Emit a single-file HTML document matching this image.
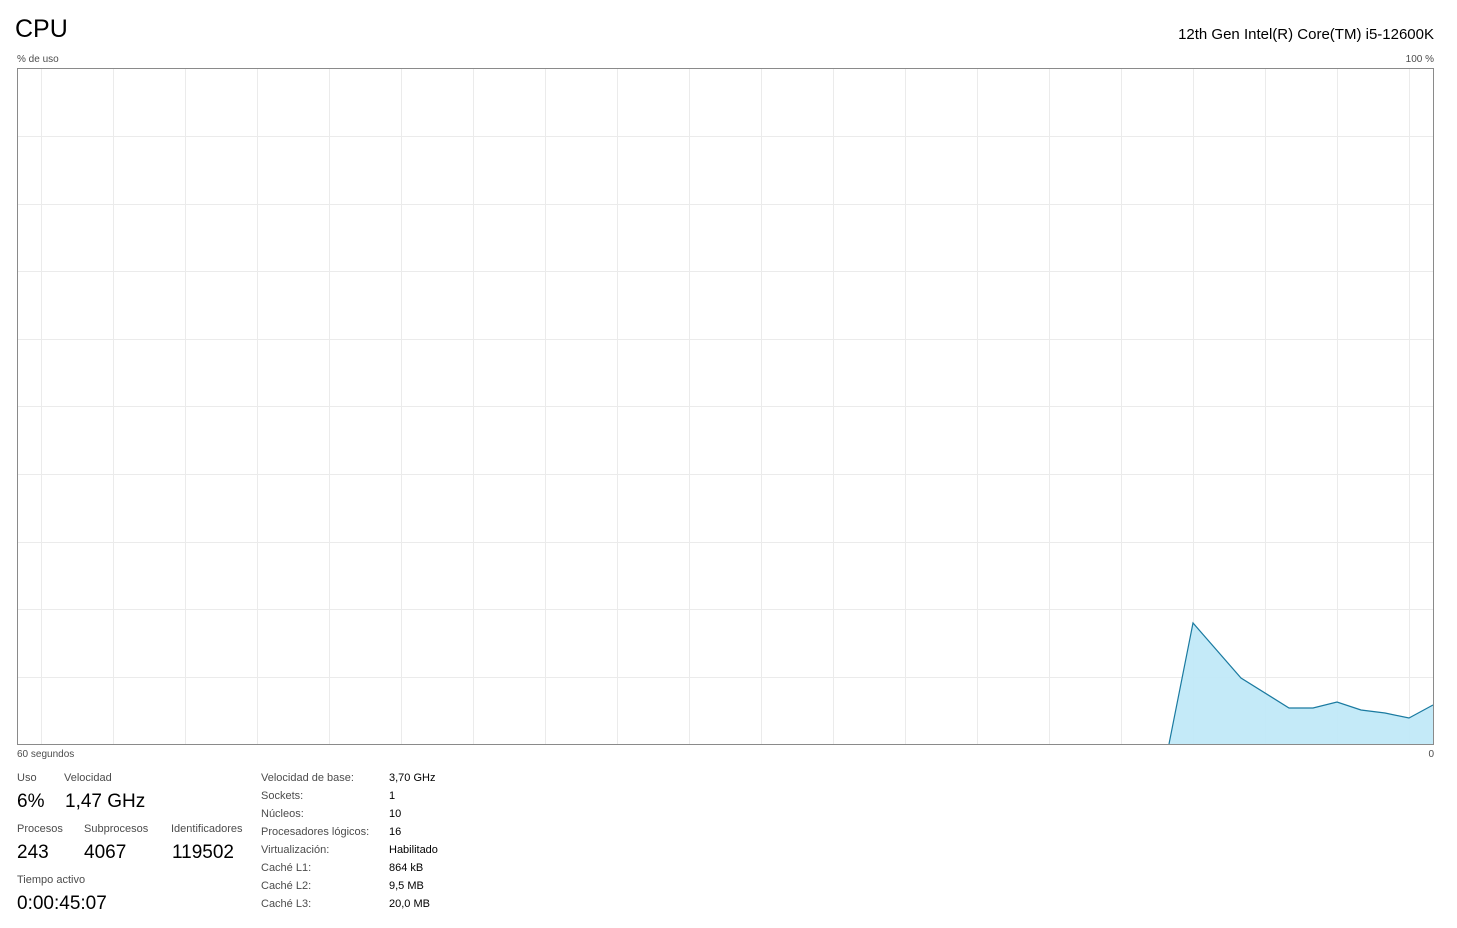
<!DOCTYPE html><html><head><meta charset="utf-8"><style>
body{margin:0;width:1457px;height:928px;background:#fff;font-family:"Liberation Sans",sans-serif;position:relative;overflow:hidden;color:#000}
.a{position:absolute;white-space:nowrap}
.g{color:#4c4c4c;font-size:11px}
.s{font-size:10px;color:#4c4c4c}
.b{font-size:19px}
.v{font-size:11px}
</style></head><body>
<div class="a" style="left:15px;top:15px;font-size:25px">CPU</div>
<div class="a" style="right:23px;top:26px;font-size:15px">12th Gen Intel(R) Core(TM) i5-12600K</div>
<div class="a s" style="left:17px;top:54px">% de uso</div>
<div class="a s" style="right:23px;top:54px">100 %</div>
<svg class="a" style="left:0;top:0" width="1457" height="760">
<g stroke="#ebebeb" stroke-width="1">
<path d="M41.5 68V744M113.5 68V744M185.5 68V744M257.5 68V744M329.5 68V744M401.5 68V744M473.5 68V744M545.5 68V744M617.5 68V744M689.5 68V744M761.5 68V744M833.5 68V744M905.5 68V744M977.5 68V744M1049.5 68V744M1121.5 68V744M1193.5 68V744M1265.5 68V744M1337.5 68V744M1409.5 68V744"/>
<path d="M17 136.5H1433M17 204.5H1433M17 271.5H1433M17 339.5H1433M17 406.5H1433M17 474.5H1433M17 542.5H1433M17 609.5H1433M17 677.5H1433"/>
</g>
<path d="M1169 744L1193 623L1241 678L1289 708L1313 708L1337 702L1361 710L1385 713L1409 718L1433 705V744Z" fill="#c1e9f8" fill-opacity="0.95"/>
<path d="M1169 744L1193 623L1241 678L1289 708L1313 708L1337 702L1361 710L1385 713L1409 718L1433 705" fill="none" stroke="#1a7aa0" stroke-width="1.2"/>
<rect x="17.5" y="68.5" width="1416" height="676" fill="none" stroke="#8a8a8a" stroke-width="1"/>
</svg>
<div class="a s" style="left:17px;top:749px">60 segundos</div>
<div class="a s" style="right:23px;top:749px">0</div>
<div class="a g" style="left:17px;top:772px">Uso</div>
<div class="a g" style="left:64px;top:772px">Velocidad</div>
<div class="a b" style="left:17px;top:791px">6%</div>
<div class="a b" style="left:65px;top:791px">1,47 GHz</div>
<div class="a g" style="left:17px;top:823px">Procesos</div>
<div class="a g" style="left:84px;top:823px">Subprocesos</div>
<div class="a g" style="left:171px;top:823px">Identificadores</div>
<div class="a b" style="left:17px;top:842px">243</div>
<div class="a b" style="left:84px;top:842px">4067</div>
<div class="a b" style="left:172px;top:842px">119502</div>
<div class="a g" style="left:17px;top:874px">Tiempo activo</div>
<div class="a b" style="left:17px;top:893px">0:00:45:07</div>
<div class="a g" style="left:261px;top:769px;line-height:18px">Velocidad de base:<br>Sockets:<br>Núcleos:<br>Procesadores lógicos:<br>Virtualización:<br>Caché L1:<br>Caché L2:<br>Caché L3:</div>
<div class="a v" style="left:389px;top:769px;line-height:18px">3,70 GHz<br>1<br>10<br>16<br>Habilitado<br>864 kB<br>9,5 MB<br>20,0 MB</div>
</body></html>
